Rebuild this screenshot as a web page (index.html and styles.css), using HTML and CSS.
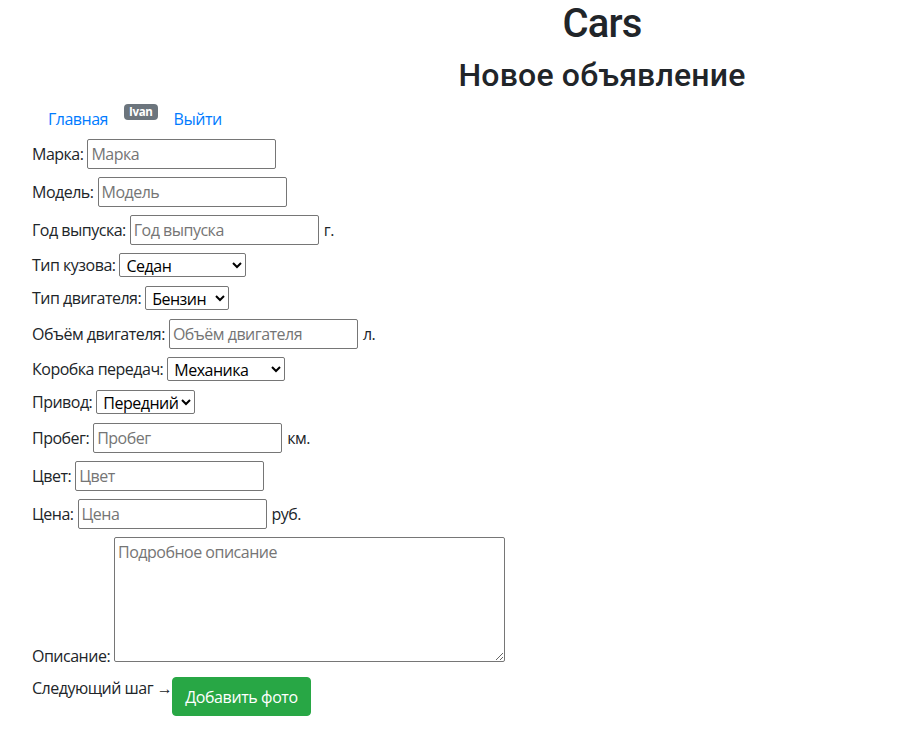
FILE: index.html
```html
<!DOCTYPE html>
<html lang="ru">
<head>
<meta charset="utf-8">
<title>Cars — Новое объявление</title>
<link rel="stylesheet" href="styles.css">
</head>
<body>
<header class="head">
  <h1 class="title">Cars</h1>
  <h2 class="subtitle">Новое объявление</h2>
</header>
<ul class="nav">
  <li><a class="nav-link" href="#">Главная</a></li>
  <li class="nav-badge"><span class="badge">Ivan</span></li>
  <li><a class="nav-link" href="#">Выйти</a></li>
</ul>
<form class="form">
  <div class="field f-input"><label>Марка:</label><input type="text" placeholder="Марка"></div>
  <div class="field f-input"><label>Модель:</label><input type="text" placeholder="Модель"></div>
  <div class="field f-input"><label>Год выпуска:</label><input type="text" placeholder="Год выпуска"><span class="unit">г.</span></div>
  <div class="field f-select"><label>Тип кузова:</label><select class="s-body"><option>Седан</option></select></div>
  <div class="field f-select"><label>Тип двигателя:</label><select class="s-engine"><option>Бензин</option></select></div>
  <div class="field f-input"><label>Объём двигателя:</label><input type="text" placeholder="Объём двигателя"><span class="unit">л.</span></div>
  <div class="field f-select"><label>Коробка передач:</label><select class="s-gear"><option>Механика</option></select></div>
  <div class="field f-select"><label>Привод:</label><select class="s-drive"><option>Передний</option></select></div>
  <div class="field f-input"><label>Пробег:</label><input type="text" placeholder="Пробег"><span class="unit">км.</span></div>
  <div class="field f-input"><label>Цвет:</label><input type="text" placeholder="Цвет"></div>
  <div class="field f-input"><label>Цена:</label><input type="text" placeholder="Цена"><span class="unit">руб.</span></div>
  <div class="field f-area"><label>Описание:</label><textarea placeholder="Подробное описание"></textarea></div>
  <div class="field f-next"><span class="next-label">Следующий шаг →</span><button type="button" class="btn">Добавить фото</button></div>
</form>
</body>
</html>
```
FILE: styles.css
```css
* { box-sizing: border-box; }
html, body { margin: 0; padding: 0; }
body {
  font-family: "Open Sans", "Noto Sans", sans-serif;
  font-size: 16px;
  line-height: 24px;
  letter-spacing: -0.5px;
  color: #212529;
  background: #fff;
  width: 913px;
  height: 749px;
  overflow: hidden;
}
.head {
  padding-left: 291px;
  text-align: center;
  font-family: Roboto, "Open Sans", sans-serif;
}
.title {
  margin: 0 0 8px;
  font-size: 40px;
  line-height: 48px;
  font-weight: 500;
  letter-spacing: -0.8px;
}
.subtitle {
  margin: 0 0 5px;
  font-size: 32px;
  line-height: 38px;
  font-weight: 500;
  letter-spacing: 0.2px;
}
.nav {
  list-style: none;
  margin: 0;
  padding: 0 0 0 32px;
  display: flex;
  align-items: flex-start;
  height: 40px;
}
.nav-link {
  display: block;
  padding: 8px 16px;
  color: #007bff;
  text-decoration: none;
}
.nav-badge { display: flex; padding-top: 5px; }
.badge {
  display: block;
  height: 16px;
  padding: 0 5px;
  font-size: 11.5px;
  line-height: 16px;
  font-weight: 700;
  letter-spacing: -0.3px;
  color: #fff;
  background: #6c757d;
  border-radius: 4px;
}
.form { padding-left: 32px; }
.field {
  display: flex;
  align-items: center;
  gap: 4px;
  margin-bottom: 8px;
}
.f-input { height: 30px; }
.f-select { height: 25px; align-items: flex-start; }
.f-select label { line-height: 24px; }
.field input {
  width: 189px;
  height: 30px;
  margin: 0;
  padding: 1px 3px;
  font: inherit;
  letter-spacing: inherit;
  color: #212529;
  border: 1px solid #767676;
  border-radius: 2px;
}
.field input::placeholder,
.field textarea::placeholder { color: #757575; opacity: 1; }
.unit { margin-left: 1px; }
.field select {
  height: 24px;
  margin: 0;
  font: inherit;
  letter-spacing: inherit;
  line-height: 20px;
  color: #000;
  padding: 0 0 0 2px;
  border: 1px solid #767676;
  border-radius: 2px;
  background: #fff;
}
.s-body { width: 127px; }
.s-engine { width: 84px; }
.s-gear { width: 118px; }
.s-drive { width: 99px; }
.f-area { align-items: flex-end; }
.f-area textarea {
  width: 391px;
  height: 125px;
  margin: 0 0 6px;
  padding: 2px 3px;
  font: inherit;
  letter-spacing: inherit;
  border: 1px solid #767676;
  border-radius: 2px;
  resize: both;
}
.f-next { align-items: flex-start; gap: 0; }
.btn {
  height: 39px;
  padding: 6px 12px;
  font: inherit;
  letter-spacing: -0.4px;
  color: #fff;
  background: #28a745;
  border: 1px solid #28a745;
  border-radius: 4px;
  margin-top: 1px;
}
```
